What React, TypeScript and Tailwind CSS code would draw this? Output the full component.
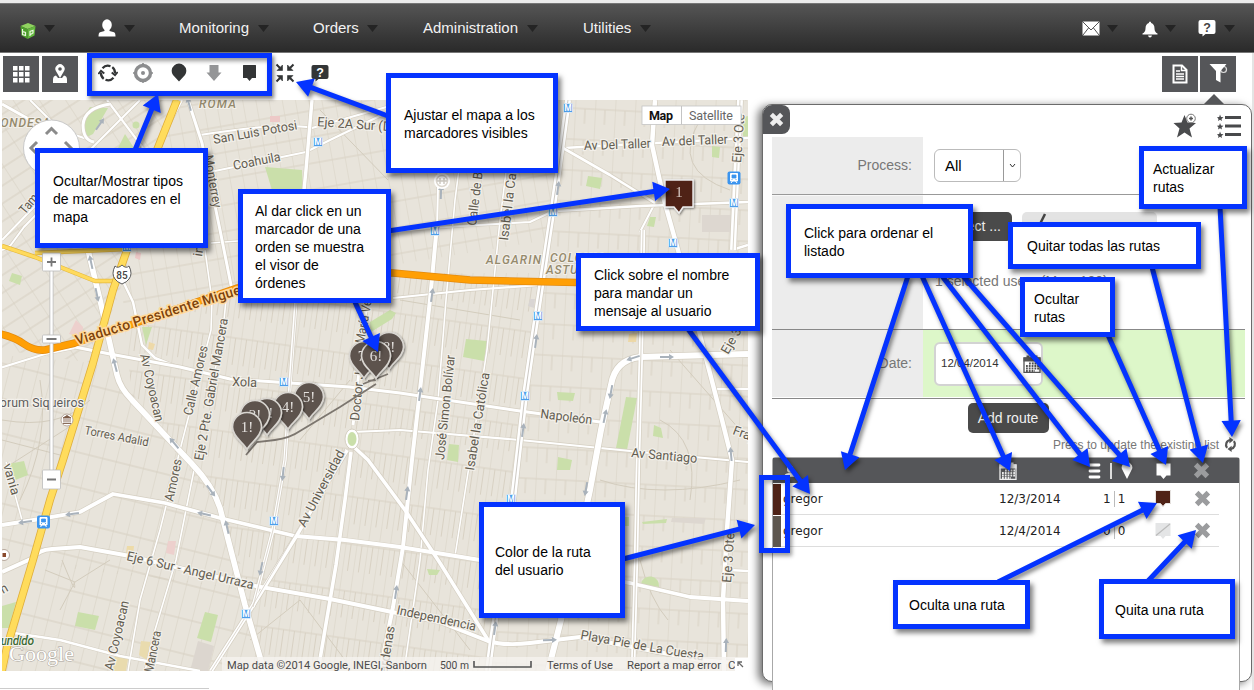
import React from "react";

/* ---------- map data ---------- */

type Road = [string, number];

const MINOR_ROADS: Road[] = [
  ["M468 100 L455 200 L446 300 L438 400 L428 470 L420 560 L404 671", 1.6],
  ["M515 100 L500 220 L487 350 L470 460 L455 556", 1.6],
  ["M2 240 L60 180 L110 130 L140 100", 2],
  ["M30 100 L60 130 L90 140", 2],
  ["M2 104 L34 122", 3],
  ["M200 135 Q280 122 312 128 L390 106", 2],
  ["M140 195 L210 172 L306 152 L330 140 L388 112", 2],
  ["M211 243 L238 241 M205 250 L212 300 L211 330 L182 442 L160 530 L140 600 L128 671", 1.6],
  ["M226 300 L222 340 L208 400 M195 465 L176 560 L155 630 L145 671", 1.6],
  ["M120 275 L133 302 L142 345 L155 358 L180 368", 2.5],
  ["M182 100 L165 132 M107 100 L143 148", 2.2],
  ["M352 432 L400 430 L520 440 L640 452 L748 462", 2.2],
  ["M393 298 L470 290 L540 285", 2.2],
  ["M6 462 L22 520", 1.6],
  ["M14 633 L60 640 L120 656 L200 671", 2.4],
  ["M0 368 L45 354 L75 348", 2],
  ["M2 250 L10 246 L24 227 L60 190", 2],
  ["M555 210 L530 222 L460 226 L380 232", 2],
  ["M735 249 L748 245 M716 389 L748 389 M729 570 L748 571", 2.4],
  ["M655 203 L640 232 M440 100 L437 230", 2],
  ["M563 148 L748 138", 2.4],
];

const MAJOR_ROADS: Road[] = [
  ["M75 347 L110 354 L180 367 L230 379 L290 383 L350 387 L400 393 L520 411 L600 422", 3],
  ["M188 100 L202 143 L220 230 L232 290", 3],
  ["M312 100 L306 170 L300 230 L296 300 L291 370 L285 460 L273 530 L253 607", 3.4],
  ["M88 250 L100 300 L117 375 Q120 388 132 400 L192 464 Q213 486 220 508 L245 605 L264 671", 5.5],
  ["M347 450 L320 495 L295 538 L252 607 L211 671", 4],
  ["M378 240 L366 310 L358 380 L353 425", 3],
  ["M351 452 L345 500 L336 565 L328 612 L318 671", 3.6],
  ["M355 448 L368 460 L405 510 L440 563 L488 640", 3.6],
  ["M2 525 L40 519 L80 512 L113 494 L165 503 L220 518 L295 536 L345 540 L400 547 L480 560 L630 583 L690 597 L748 601", 3.8],
  ["M2 572 L33 558 Q38 550 52 549 L80 547 L130 556 L250 585 L330 599 L392 612 L440 622 L488 641 Q505 646 530 643 L580 637 L700 660 L748 664", 4],
  ["M437 225 L430 300 L420 390 L412 460 L403 547 L393 607 L380 671", 4],
  ["M568 100 L557 180 L548 240 L533 340 L525 395 L513 500 L492 640 L488 671", 6],
  ["M748 354 L640 357 Q615 360 611 385 L601 430 L590 490 L575 560 L561 620 L548 671", 6],
  ["M643 230 L641 350 L638 460 L636 560 L633 671", 4.5],
  ["M740 100 L736 180 L733 250", 6],
  ["M655 100 L652 145 L664 200 L678 250 L700 335 L713 385 L722 420 L732 460 L727 530 L723 600 L724 671", 4.5],
  ["M563 148 L610 175 L655 203", 2.6],
  ["M555 211 L640 206 L748 202", 2.6],
  ["M110 104 Q84 108 83 125 Q83 140 94 142", 3],
];

const PARKS = [
  "M90 107 L108 108 L93 134 L85 138 L83 118 Z",
  "M118 148 L125 134 L134 148 Z",
  "M265 167 L302 170 L303 190 L272 190 Z",
  "M12 273 L22 276 L20 285 L9 281 Z",
  "M370 322 L390 310 L396 313 L392 319 L371 332 Z",
  "M142 327 L152 327 L146 345 Z",
  "M466 339 L487 341 L484 361 L463 357 Z",
  "M557 392 L575 393 L573 401 L558 400 Z",
  "M626 397 L637 398 L627 450 L616 448 Z",
  "M654 425 L661 428 L663 438 L653 436 Z",
  "M449 444 L459 445 L458 462 L447 460 Z",
  "M558 457 L572 460 L570 470 L557 470 Z",
  "M588 176 L602 178 L600 189 L586 186 Z",
  "M650 217 L656 217 L654 227 L647 226 Z",
  "M712 146 L720 147 L719 158 L712 157 Z",
  "M742 118 L748 116 L748 138 L743 136 Z",
  "M8 464 L24 461 L28 475 L13 481 Z",
  "M78 612 L99 616 L95 630 L75 626 Z",
  "M205 612 L218 615 L211 642 L197 638 Z",
  "M2 606 L16 602 L9 628 L2 628 Z",
  "M642 522 L667 519 L666 523 L643 524 Z",
  "M641 584 A9 9 0 0 1 659 587 Z",
  "M427 569 L440 570 L437 575 L429 575 Z",
  "M625 517 L629 517 L629 526 L625 526 Z",
];

const BLOCKS: [string, string][] = [
  ["M76 320 L83 327 L82 337 L69 334 Z", "#edd0cd"],
  ["M168 541 L176 541 L174 555 L166 553 Z", "#edd0cd"],
  ["M270 116 L280 116 L280 122 L270 122 Z", "#edc9c7"],
  ["M136 252 L141 253 L140 260 L135 258 Z", "#edc9c7"],
  ["M629 334 L637 333 L636 342 L628 342 Z", "#eed9a8"],
  ["M141 641 L151 642 L147 660 L139 655 Z", "#e9dbae"],
  ["M115 655 L128 659 L126 671 L113 671 Z", "#e9dbae"],
  ["M127 546 L134 546 L133 555 L126 553 Z", "#eddba8"],
  ["M149 342 L155 344 L153 350 L148 349 Z", "#eed9a8"],
  ["M198 641 L214 646 L208 671 L190 671 Z", "#dcd6cf"],
  ["M702 215 L736 215 L736 232 L702 232 Z", "#ddd7d0"],
  ["M672 518 L706 518 L704 524 L671 522 Z", "#ddd7d0"],
  ["M530 299 L535 299 L534 308 L528 306 Z", "#d9d5d3"],
];

type Label = [string, number, number, number, number, number?];

const STREET_LABELS: Label[] = [
  ["San Luis Potosi", 214, 144, -10, 85],
  ["Coahuila", 234, 170, -11, 48],
  ["Eje 2A Sur (D", 317, 126, 4, 74],
  ["Monterrey", 204, 156, 80, 53],
  ["Tam", 25, 215, -50, 22],
  ["in", 202, 257, -82, 11],
  ["Av Del Taller", 584, 150, -2, 67],
  ["Av del Taller", 662, 146, -2, 66],
  ["Eje 3 Ote", 741, 163, -86, 49],
  ["Eje 3 Ote", 731, 583, -86, 50],
  ["Calle de B", 476, 226, -83, 54],
  ["Isabel la Ca", 508, 241, -83, 68],
  ["Av Coyoacan", 140, 355, 77, 69],
  ["Calle Amores", 192, 416, -77, 71],
  ["Eje 2 Pte. Gabriel Mancera", 203, 461, -80, 144],
  ["Xola", 232, 386, 2, 25],
  ["Torres Adalid", 84, 434, 11, 65, 12],
  ["Doctor J", 359, 421, -84, 49],
  ["María Ve", 364, 344, -80, 44],
  ["Av Universidad", 305, 528, -62, 85],
  ["Amores", 173, 502, -78, 43],
  ["Av Coyoacan", 113, 671, -77, 71],
  ["Mancera", 153, 673, -79, 42],
  ["Eje 6 Sur - Angel Urraza", 126, 560, 13, 130],
  ["vania", 3, 465, 74, 32],
  ["José Simon Bolívar", 444, 460, -84, 105],
  ["Isabel la Católica", 474, 471, -81, 99],
  ["Napoleón", 540, 418, 7, 52],
  ["Av Santiago", 631, 457, 5, 66],
  ["Fray", 732, 434, 20, 24],
  ["Eje 3", 728, 355, -60, 28],
  ["Independencia", 396, 614, 12, 81],
  ["Playa Pie de La Cuesta", 580, 639, 10, 125],
  ["Cárdenas", 386, 682, -81, 56],
  ["n", 3, 594, -30, 7],
];

const AREA_LABELS: Label[] = [
  ["ROMA", 199, 108, 0, 37],
  ["CONDESA", -8, 127, 0, 58],
  ["ALGARIN", 486, 264, 0, 55],
  ["COLONIA", 550, 262, 0, 55],
  ["ASTURIAS", 546, 274, 0, 60],
];

const METRO: [number, number][] = [
  [318, 142], [568, 108], [284, 382], [553, 212], [435, 231], [673, 243],
  [734, 203], [538, 316], [525, 396], [274, 521], [246, 614], [511, 499], [127, 247],
];

const FLOW_ARROWS: [number, number, number][] = [
  [189, 104, -15], [100, 124, 35], [91, 262, -12], [97, 295, 168], [115, 365, -15], [174, 443, -40],
  [558, 188, 8], [432, 295, 8], [536, 341, 8], [420, 394, 8], [523, 430, 8], [611, 392, 190],
  [605, 416, 12], [633, 358, 252], [667, 357, 90], [731, 454, -5], [72, 514, 262], [25, 522, 262],
  [204, 514, 282], [211, 491, 143], [227, 527, -13], [283, 474, 186], [261, 569, 192], [396, 592, 8],
  [407, 493, 8], [586, 489, 190], [495, 628, 8], [550, 640, 88], [726, 645, 2], [441, 192, 2],
];

const PINS: [string, number, number][] = [
  ["5!", 309, 399], ["4!", 288, 409], ["3!", 267, 415], ["2!", 255, 417], ["1!", 247, 429],
  ["8!", 389, 349], ["7!", 364, 358], ["6!", 376, 358],
];

function MapCanvas() {
  return (
    <svg viewBox="2 100 746 571" width={746} height={571} className="block font-['Roboto',sans-serif]">
      <defs>
        <pattern id="g1" width="11" height="47" patternUnits="userSpaceOnUse" patternTransform="rotate(8)">
          <path d="M0 0V47M0 20H11M5.5 20V47" stroke="#d8d1c3" strokeWidth="1" fill="none" />
        </pattern>
        <pattern id="g2" width="14" height="34" patternUnits="userSpaceOnUse" patternTransform="rotate(14)">
          <path d="M0 0V34M0 12H14" stroke="#d6cfc1" strokeWidth="1" fill="none" />
        </pattern>
        <pattern id="g3" width="22" height="15" patternUnits="userSpaceOnUse" patternTransform="rotate(-33)">
          <path d="M0 0V15M0 7H22" stroke="#d6cfc1" strokeWidth="1" fill="none" />
        </pattern>
        <pattern id="g4" width="13" height="26" patternUnits="userSpaceOnUse" patternTransform="rotate(-10)">
          <path d="M0 0V26M0 7H13" stroke="#d8d1c3" strokeWidth="1" fill="none" />
        </pattern>
        <pattern id="g5" width="20" height="31" patternUnits="userSpaceOnUse" patternTransform="rotate(3)">
          <path d="M0 0V31M0 16H20M10 16V31" stroke="#d8d1c3" strokeWidth="1" fill="none" />
        </pattern>
        <filter id="pinShade" x="-30%" y="-30%" width="160%" height="160%">
          <feDropShadow dx="1" dy="1" stdDeviation="1" floodOpacity="0.5" />
        </filter>
      </defs>
      <rect x="2" y="100" width="746" height="571" fill="#e8e4db" />
      <path d="M2 100H175L120 290L93 363L2 350Z" fill="url(#g3)" />
      <path d="M175 100H560L548 240L240 290L125 320L120 270Z" fill="url(#g4)" />
      <path d="M125 325L240 290L393 273H545L488 671H264L220 508L132 400Z" fill="url(#g1)" />
      <path d="M2 355L93 363L117 375L192 464L220 508L250 590L2 560Z" fill="url(#g2)" />
      <path d="M30 558L250 590L264 671H2Z" fill="url(#g2)" />
      <path d="M568 100H748V671H488L525 395Z" fill="url(#g5)" />
      <path
        d="M2 420Q60 430 90 400M2 440L60 455M20 500Q50 440 40 380M2 470L80 420M62 560Q78 600 74 582M45 570L75 582L110 560M75 582L60 610M520 320L400 300M300 440L350 380M600 480Q660 500 740 480M660 420Q700 440 690 500M670 350L740 430M668 620Q650 600 640 560M250 640L300 600L345 660M400 560L470 650M700 120Q670 170 730 190M320 110L388 180"
        stroke="#d3ccbd" fill="none"
      />
      {PARKS.map((d) => <path key={d} d={d} fill="#cadfaa" />)}
      {BLOCKS.map(([d, c]) => <path key={d} d={d} fill={c} />)}
      <circle cx="136" cy="125" r="3.5" fill="#cadfaa" />
      <g fill="none" strokeLinejoin="round">
        {MINOR_ROADS.map(([d, w]) => <path key={d} d={d} stroke="#d5cfc2" strokeWidth={w + 1.2} />)}
        {MINOR_ROADS.map(([d, w]) => <path key={"t" + d} d={d} stroke="#fff" strokeWidth={w} />)}
        {MAJOR_ROADS.map(([d, w]) => <path key={d} d={d} stroke="#d5cfc2" strokeWidth={w + 1.4} />)}
        {MAJOR_ROADS.map(([d, w]) => <path key={"t" + d} d={d} stroke="#fff" strokeWidth={w} />)}
        <path d="M568 100L557 180L548 240L533 340L525 395L513 500L492 640L488 671" stroke="#ccc8c2" />
        <path d="M643 230L641 350L638 460L636 560L633 671M740 100L733 250" stroke="#d9d4ca" />
        <path d="M345 450L250 610L211 671M302 220L285 460L273 530L253 607" stroke="#d3cdc3" strokeWidth="0.8" />
        <path d="M2 246L35 257L95 281H116M35 253L127 249" stroke="#e5b93f" strokeWidth="4.5" />
        <path d="M2 246L35 257L95 281H116M35 253L127 249" stroke="#ffda5c" strokeWidth="3.2" />
        <path d="M177 100L155 155L127 250L113 290L93 363L63 460L50 500L33 560L7 647L1 675" stroke="#dfae3b" strokeWidth="8" />
        <path d="M177 100L155 155L127 250L113 290L93 363L63 460L50 500L33 560L7 647L1 675" stroke="#ffdc5c" strokeWidth="6.4" />
        <path d="M0 334Q14 337 24 344T45 350L75 343L130 325L240 287Q300 270 393 273L470 280L600 283" stroke="#e28a10" strokeWidth="7.5" />
        <path d="M0 334Q14 337 24 344T45 350L75 343L130 325L240 287Q300 270 393 273L470 280L600 283" stroke="#ff9f05" strokeWidth="6" />
      </g>
      <ellipse cx="352" cy="439" rx="7" ry="10" fill="#fff" stroke="#d5cfc2" />
      <ellipse cx="352" cy="439" rx="4.5" ry="7" fill="#cadfaa" />
      {FLOW_ARROWS.map(([x, y, a], i) => (
        <path key={i} transform={`translate(${x} ${y}) rotate(${a})`} d="M0-7L3-2H1V7H-1V-2H-3Z" fill="#a9b2bb" />
      ))}
      <g fill="#625c50" stroke="#f3f0ea" strokeWidth="2.4" paintOrder="stroke" fontSize="13">
        {STREET_LABELS.map(([t, x, y, a, l, s], i) => (
          <text key={i} transform={`translate(${x} ${y}) rotate(${a})`} textLength={l} lengthAdjust="spacingAndGlyphs" fontSize={s ?? 13}>{t}</text>
        ))}
        <text x="-7" y="407" fontSize="12.5" textLength="91" fill="#5c5c5c">Forum Siqueiros</text>
      </g>
      <g fill="#958a6d" stroke="#f3f0ea" strokeWidth="2" paintOrder="stroke" fontSize="12" fontStyle="italic" fontWeight="500">
        {AREA_LABELS.map(([t, x, y, , l]) => <text key={t} x={x} y={y} textLength={l}>{t}</text>)}
      </g>
      <text transform="translate(77 345) rotate(-17.2)" textLength="176" fontSize="14" fontWeight="500" fill="#7d420b" stroke="#ffd99a" strokeWidth="3" paintOrder="stroke">
        Viaducto Presidente Miguel
      </text>
      <text x="-7" y="645" fontSize="12" fontStyle="italic" fontWeight="500" textLength="41" fill="#3d6b35" stroke="#f3f0ea" strokeWidth="2" paintOrder="stroke">Hundido</text>
      {METRO.map(([x, y]) => (
        <g key={x + "-" + y}>
          <rect x={x - 4.5} y={y - 4.5} width="9" height="9" rx="1" fill="#4d9eea" stroke="#e7f1fa" strokeWidth="0.8" />
          <text x={x} y={y + 3} fontSize="8.5" fontWeight="700" textAnchor="middle" fill="#fff">M</text>
        </g>
      ))}
      {[[43.5, 522], [734, 178]].map(([x, y]) => (
        <g key={x} transform={`translate(${x} ${y})`}>
          <rect x="-6.5" y="-6.5" width="13" height="13" rx="2" fill="#3b94ee" />
          <path d="M-3.5-4.5H3.5V3H-3.5ZM-3 5L-1.5 3M3 5L1.5 3" fill="#fff" stroke="#fff" />
          <path d="M-2-3H2V0H-2ZM-2.500 1.500H-1.500M1.500 1.500H2.500" fill="#3b94ee" stroke="#3b94ee" strokeWidth="0.8" />
        </g>
      ))}
      <path d="M115 266Q118 269 122 265Q126 269 129 266Q133 274 129 279Q127 282 122 284Q117 282 115 279Q111 274 115 266Z" fill="#fff" stroke="#5b5b5b" />
      <text x="122" y="279" fontSize="10" fontWeight="500" textAnchor="middle" fill="#444">85</text>
      <circle cx="67" cy="420" r="6" fill="#fff" stroke="#b7a89c" />
      <path d="M63 418L67 415.5L71 418ZM64 419V422.5M66 419V422.5M68 419V422.5M70 419V422.5M63 423.5H71" stroke="#7b5a46" fill="#7b5a46" strokeWidth="0.9" />
      <circle cx="4" cy="555" r="5.5" fill="#fff" stroke="#b7a89c" />
      <rect x="2.5" y="553" width="3.5" height="4" fill="#8a4a2d" />
      <circle cx="442" cy="181" r="8" fill="#fff" />
      <circle cx="442" cy="181" r="5.5" fill="none" stroke="#dcd7cf" strokeWidth="1.5" />
      <path d="M440 178V184M444 178V184M437 181H447" stroke="#d0cbc4" strokeWidth="1.500" />

      {/* driven route and its stops */}
      <path d="M246 455L257 442L275 440Q290 438 300 431L340 407L376 384M363 384L388 374M368 381L376 380" fill="none" stroke="#7c766f" strokeWidth="1.8" />
      {PINS.map(([t, x, y]) => (
        <g key={t} transform={`translate(${x} ${y})`} filter="url(#pinShade)">
          <path d="M0 20.5C-2.500 14-14.500 8-14.500-2A14.500 14.500 0 1 1 14.500-2C14.500 8 2.500 14 0 20.500Z" fill="#5d534d" stroke="#d9d6d1" strokeWidth="1.6" />
          <text x="0" y="3" fontSize="15" textAnchor="middle" fill="#e4e1de" className="font-['Liberation_Serif',serif]">{t}</text>
        </g>
      ))}
      <g filter="url(#pinShade)">
        <path d="M665 180H693V207H683L679 213L674 207H665Z" fill="#4f2317" stroke="#eee" strokeWidth="1.4" />
        <text x="679" y="197" fontSize="15" textAnchor="middle" fill="#d6c8c2" className="font-['Liberation_Serif',serif]">1</text>
      </g>

      {/* pan and zoom controls */}
      <circle cx="51.5" cy="148" r="28" fill="#fff" stroke="#c9c9c9" />
      <g fill="none" stroke="#8b8b8b" strokeWidth="3">
        <path d="M46 134L51.500 128.500L57 134M37 142L31 148L37 154M65 142L71 148L65 154" />
      </g>
      <path d="M51.500 270V471" stroke="#bdbdbd" strokeWidth="4" />
      <path d="M51.500 270V471" stroke="#fff" strokeWidth="2.4" />
      <g fill="#fff" stroke="#bbb" strokeWidth="0.8">
        <rect x="42.500" y="253" width="18" height="18" rx="1" />
        <rect x="42.500" y="335" width="18" height="8" rx="1" />
        <rect x="42.500" y="470" width="18" height="19" rx="1" />
      </g>
      <path d="M47 262H56M51.500 257.500V266.500M46.500 339H56.500M47 479.500H56" stroke="#777" strokeWidth="1.8" />

      {/* map type switch */}
      <rect x="642" y="106" width="99" height="18.500" fill="#fff" stroke="#c4c4c4" strokeWidth="0.8" />
      <path d="M681.500 106V124.500" stroke="#c4c4c4" />
      <text x="649" y="120" fontSize="12.500" fontWeight="700" textLength="24" fill="#111">Map</text>
      <text x="689" y="120" fontSize="12.500" textLength="44" fill="#666">Satellite</text>

      {/* attribution */}
      <rect x="222" y="657" width="526" height="14" fill="#f5f3ef" fillOpacity="0.8" />
      <g fontSize="11.500" fill="#4a4a4a">
        <text x="227" y="668.500" textLength="200" lengthAdjust="spacingAndGlyphs">Map data ©2014 Google, INEGI, Sanborn</text>
        <text x="440" y="668.500" textLength="29" lengthAdjust="spacingAndGlyphs">500 m</text>
        <text x="547" y="668.500" textLength="66" lengthAdjust="spacingAndGlyphs">Terms of Use</text>
        <text x="627" y="668.500" textLength="94" lengthAdjust="spacingAndGlyphs">Report a map error</text>
        <text x="728" y="668.500">C</text>
      </g>
      <path d="M474 661V667H531V661" fill="none" stroke="#555" strokeWidth="1.600" />
      <rect x="735" y="658" width="13" height="13" fill="#fff" />
      <path d="M738 666V662H742M738.500 662.500L743 667" fill="none" stroke="#666" strokeWidth="1.300" />
      <text x="9" y="661" fontSize="22" textLength="65" lengthAdjust="spacingAndGlyphs" fill="#fff" stroke="#aaa59c" strokeWidth="1" paintOrder="stroke" className="font-['Liberation_Serif',serif]">Google</text>
    </svg>
  );
}

/* ---------- icons ---------- */

const Caret = () => (
  <svg width="11" height="7" viewBox="0 0 11 7"><path d="M0 0H11L5.500 7Z" fill="#242424" /></svg>
);

const CubeIcon = () => (
  <svg width="16" height="18" viewBox="0 0 16 18">
    <path d="M8 1L15.500 4L7.500 7L0.500 4Z" fill="#8fd35f" />
    <path d="M0.500 4L7.500 7V17L1.500 13.500Z" fill="#4da02c" />
    <path d="M15.500 4L7.500 7V17L14.500 13.500Z" fill="#63b83d" />
    <path d="M2.500 7V12.500L5.500 13.500V10.500L2.500 9.500M10 14V9.500L13 8.300V11L10.500 12.500" stroke="#eaf7df" fill="none" strokeWidth="1.200" />
  </svg>
);

const UserIcon = () => (
  <svg width="18" height="18" viewBox="0 0 18 18" fill="#fff">
    <ellipse cx="9" cy="6" rx="4.800" ry="5.700" />
    <path d="M6.500 9H11.500V12L16 13.200Q17.500 13.800 17.500 17.500H0.500Q0.500 13.800 2 13.200L6.500 12Z" />
  </svg>
);

const MailIcon = () => (
  <svg width="18" height="15" viewBox="0 0 18 15">
    <rect x="0.500" y="0.500" width="17" height="14" rx="1" fill="#fff" />
    <path d="M1 1L9 9L17 1M1 14L6.500 7M17 14L11.500 7" stroke="#555" fill="none" strokeWidth="1" />
  </svg>
);

const BellIcon = () => (
  <svg width="16" height="17" viewBox="0 0 16 17" fill="#fff">
    <path d="M8 0.500Q9 0.500 9.200 2Q12.500 3 12.500 7.500Q12.500 11 15.500 12.500V13.500H0.500V12.500Q3.500 11 3.500 7.500Q3.500 3 6.800 2Q7 0.500 8 0.500Z" />
    <path d="M6 14.500H10Q9.500 16.500 8 16.500T6 14.500Z" />
  </svg>
);

const HelpBubble = ({ bg, fg }: { bg: string; fg: string }) => (
  <svg width="18" height="18" viewBox="0 0 18 18">
    <path d="M2.500 1H15.500Q17.500 1 17.500 3V13Q17.500 15 15.500 15H7.500L4.500 17.500V15H2.500Q0.500 15 0.500 13V3Q0.500 1 2.500 1Z" fill={bg} />
    <text x="9" y="12.500" fontSize="12.500" fontWeight="700" textAnchor="middle" fill={fg} className="font-['Liberation_Sans',sans-serif]">?</text>
  </svg>
);

const RefreshIcon = ({ color }: { color: string }) => (
  <svg width="15" height="15" viewBox="0 0 20 20">
    <path d="M5.500 14.500A6.500 6.500 0 0 1 9.500 4M14.500 5.500A6.500 6.500 0 0 1 10.500 16" fill="none" stroke={color} strokeWidth="3" />
    <path d="M8.500 0L14 4L8.500 8.500ZM11.500 11.500L6 16L11.500 20Z" fill={color} />
  </svg>
);

const SyncRing = () => (
  <svg width="20" height="20" viewBox="0 0 20 20" fill="none" stroke="#333536" strokeWidth="2.200">
    <path d="M4.500 5.200A7.200 7.200 0 0 1 12.500 3.200M14.300 4.200A7.200 7.200 0 0 1 17 10.500M15.500 14.800A7.200 7.200 0 0 1 7.500 16.800M5.700 15.800A7.200 7.200 0 0 1 3 9.500" />
    <path d="M0.300 11L3 7.800L6.300 10.500M13.700 9.500L17 12.200L19.700 9" strokeWidth="1.800" />
  </svg>
);

const CrossIcon = ({ size, color }: { size: number; color: string }) => (
  <svg width={size} height={size} viewBox="0 0 16 16">
    <path d="M2.500 2.500L13.500 13.500M13.500 2.500L2.500 13.500" stroke={color} strokeWidth="4.800" />
  </svg>
);

const CalendarIcon = ({ color, cell }: { color: string; cell: string }) => (
  <svg width="18" height="18" viewBox="0 0 18 18">
    <path d="M1 3H17V17.500H1Z" fill="none" stroke={color} strokeWidth="1.300" />
    <path d="M0.500 2.500H17.500V6.500H0.500ZM3.500 0.500H6.500V3H3.500ZM11.500 0.500H14.500V3H11.500Z" fill={color} />
    <path d="M6 8.500H16M3 11H16M3 13.500H16M3 16H12" stroke={cell} strokeWidth="1.800" strokeDasharray="1.800 1" />
  </svg>
);

const toolIcons: React.ReactNode[] = [
  <SyncRing key="sync" />,
  <svg key="target" width="20" height="20" viewBox="0 0 20 20">
    <circle cx="10" cy="10" r="7.500" fill="none" stroke="#8c8d8f" strokeWidth="3.400" />
    <circle cx="10" cy="10" r="2" fill="#8c8d8f" />
    <path d="M10 0V3M10 17V20M0 10H3M17 10H20" stroke="#8c8d8f" strokeWidth="1.500" />
  </svg>,
  <svg key="pin" width="16" height="19" viewBox="0 0 16 19"><path d="M8 18.500L2 12A7.300 7.300 0 1 1 14 12Z" fill="#333536" /></svg>,
  <svg key="down" width="16" height="18" viewBox="0 0 16 18"><path d="M3.500 1H12.500V8.500H15.500L8 17L0.500 8.500H3.500Z" fill="#949597" /></svg>,
  <svg key="flag" width="15" height="18" viewBox="0 0 15 18"><path d="M1.500 1H13.500Q14 1 14 1.500V14H10L7.500 17L5 14H1V1.500Q1 1 1.500 1Z" fill="#333536" /></svg>,
  <svg key="fit" width="20" height="20" viewBox="0 0 20 20" fill="#333536" stroke="#333536" strokeWidth="2">
    <path d="M1.500 1.500L5 5M18.500 1.500L15 5M1.500 18.500L5 15M18.500 18.500L15 15" />
    <path d="M7.500 2V7.500H2ZM12.500 2V7.500H18ZM7.500 18V12.500H2ZM12.500 18V12.500H18Z" strokeWidth="0.600" />
  </svg>,
  <HelpBubble key="help" bg="#333536" fg="#fff" />,
];

/* ---------- header and toolbar ---------- */

function NavBar() {
  return (
    <header className="flex h-[50px] shrink-0 items-center border-y border-[#777] bg-linear-to-b from-[#555] to-[#2a2a2a] font-['Liberation_Sans',sans-serif] text-[15px] text-[#f2f2f2]">
      <div className="flex w-[98px] items-center gap-[8px] pl-[20px]"><span className="pt-[5px]"><CubeIcon /></span><Caret /></div>
      <div className="flex w-[81px] items-center gap-[8px]"><UserIcon /><Caret /></div>
      <div className="flex w-[134px] items-center gap-[9px]">Monitoring<Caret /></div>
      <div className="flex w-[110px] items-center gap-[8px]">Orders<Caret /></div>
      <div className="flex w-[160px] items-center gap-[9px]">Administration<Caret /></div>
      <div className="flex flex-1 items-center gap-[9px]">Utilities<Caret /></div>
      <div className="flex w-[60px] items-center gap-[7px]"><MailIcon /><Caret /></div>
      <div className="flex w-[56px] items-center gap-[7px]"><span className="pt-[2px]"><BellIcon /></span><Caret /></div>
      <div className="flex w-[56px] items-center gap-[8px]"><HelpBubble bg="#fff" fg="#444" /><Caret /></div>
    </header>
  );
}

const darkButton = "flex h-[36px] w-[36px] items-center justify-center bg-[#555659]";

function Toolbar() {
  return (
    <div className="flex h-[47px] shrink-0 items-start pt-[3px] pl-[3px]">
      <div className={darkButton}>
        <svg width="17" height="17" viewBox="0 0 17 17" fill="#fff">
          {[0, 6, 12].map((y) => [0, 6, 12].map((x) => <rect key={x + "," + y} x={x} y={y} width="4.500" height="4.500" />))}
        </svg>
      </div>
      <div className={"ml-[3px] " + darkButton}>
        <svg width="16" height="20" viewBox="0 0 16 20">
          <path d="M1 19V15.500Q1 12 4 11.500L6 14H10L12 11.500Q15 12 15 15.500V19Z" fill="#fff" />
          <path d="M8 14L4.200 7.500A4.600 4.600 0 1 1 11.800 7.500Z" fill="#fff" />
          <circle cx="8" cy="5" r="1.800" fill="#555659" />
        </svg>
      </div>
      <div className="ml-[12px] grid h-[33px] w-[248px] grid-cols-7 place-items-center">
        {toolIcons}
      </div>
      <div className="relative mr-[18px] ml-auto flex gap-[2px]">
        <div className={darkButton}>
          <svg width="16" height="20" viewBox="0 0 16 20">
            <path d="M1.500 1.500H10L14.500 6V18.500H1.500Z" fill="none" stroke="#fff" strokeWidth="2" />
            <path d="M9.500 1V6.500H15M4 7H8M4 10H12M4 12.500H12M4 15H12" fill="none" stroke="#fff" strokeWidth="1.500" />
          </svg>
        </div>
        <div className={darkButton}>
          <svg width="19" height="20" viewBox="0 0 19 20" className="-mt-[2px]">
            <circle cx="14.500" cy="6.500" r="3" fill="none" stroke="#ddd" strokeWidth="1.200" />
            <path d="M0.500 1H17.500L11.500 8V19.500L7 17V8Z" fill="#fff" />
          </svg>
        </div>
        <svg className="absolute top-[38px] right-[12px]" width="20" height="10" viewBox="0 0 20 10"><path d="M10 0L20 10H0Z" fill="#555659" /></svg>
      </div>
    </div>
  );
}

/* ---------- route panel ---------- */

const RouteRow = ({ color, date, count, hidden }: { color: string; date: string; count: string; hidden?: boolean }) => (
  <div className="flex h-[32px] font-['DejaVu_Sans',sans-serif] text-[12px] text-[#222]">
    <span className="my-[0.5px] w-[8px] shrink-0" style={{ background: color }} />
    <div className="grid w-[438px] grid-cols-[216px_100px_55px_40px_26px] items-center border-b border-[#ddd] pl-[2px]">
      <span>gregor</span>
      <span>{date}</span>
      <span className="flex items-center pl-[4px]">
        {count}<span className="mr-[3px] ml-[3px] h-[16px] w-px bg-[#bbb]" />{count}
      </span>
      <svg width="18" height="20" viewBox="0 0 18 20">
        {hidden ? (
          <g><path d="M1.500 2H16.500V15H11.500L9 18L6.500 15H1.500Z" fill="#e4e5e6" /><path d="M2 14.500L16 3" stroke="#bbb" strokeWidth="1.200" /></g>
        ) : (
          <path d="M1.500 1.500H16.500V14.500H11.500L9 17.500L6.500 14.500H1.500Z" fill="#4f2317" stroke="#e6e3e1" />
        )}
      </svg>
      <CrossIcon size={17} color="#9b9c9e" />
    </div>
  </div>
);

function RoutePanel() {
  return (
    <aside className="mt-[4px] ml-[14px] flex h-[578px] w-[490px] flex-col rounded-[10px] border border-[#6b6b6b] bg-white font-['Liberation_Sans',sans-serif] shadow-[-4px_2px_8px_rgba(0,0,0,0.55)]">
      <div className="flex h-[32px] shrink-0 items-start justify-between">
        <div className="flex h-[29px] w-[27px] items-center justify-center rounded-tl-[9px] rounded-r-[8px] bg-[#555659]">
          <CrossIcon size={15} color="#eee" />
        </div>
        <div className="flex items-center gap-[20px] pt-[8px] pr-[10px]">
          <svg width="24" height="25" viewBox="0 0 24 25">
            <path d="M11.500 2L14.500 9.500L23 10L16.500 15.500L19 24.500L11.500 19.500L4 24.500L6.500 15.500L0.500 10L8.500 9.500Z" fill="#4a4b4d" />
            <circle cx="18" cy="5.500" r="4.300" fill="#fff" stroke="#777" />
            <path d="M18 3.500V7.500M16 5.500H20" stroke="#555" strokeWidth="1.500" />
          </svg>
          <svg width="24" height="24" viewBox="0 0 24 24" stroke="#48494b" strokeWidth="3">
            <path d="M8 3.500H24M8 12H24M8 20.500H24" />
            <path d="M3 0.500L4 3L6.500 3.200L4.500 5L5 7L3 5.800L1 7L1.500 5L0 3.200L2.200 3ZM3 9L4 11.500L6.500 11.700L4.500 13.500L5 15.500L3 14.300L1 15.500L1.500 13.500L0 11.700L2.200 11.500ZM3 17.500L4 20L6.500 20.200L4.500 22L5 24L3 22.800L1 24L1.500 22L0 20.200L2.200 20Z" fill="#48494b" stroke="none" />
          </svg>
        </div>
      </div>
      <div className="ml-[9px] flex w-[473px] shrink-0 flex-col text-[14px] text-[#777]">
        <div className="flex h-[58px] border-b border-[#999]">
          <div className="flex w-[151px] items-center justify-end bg-[#ececec] pr-[11px]">Process:</div>
          <div className="flex items-center pl-[11px]">
            <div className="flex h-[33px] w-[87px] items-center overflow-hidden rounded-[6px] border border-[#bbb] bg-white text-[15px] text-black">
              <span className="flex-1 pt-[2px] pl-[10px]">All</span>
              <span className="flex h-full w-[17px] items-center justify-center border-l border-[#999]">
                <svg width="7" height="5" viewBox="0 0 7 5"><path d="M1 1L3.500 4L6 1" stroke="#333" fill="none" /></svg>
              </span>
            </div>
          </div>
        </div>
        <div className="flex h-[135px] border-b border-[#888]">
          <div className="w-[151px] border-t border-[#f8f8f8] bg-[#ececec]" />
          <div className="flex flex-1 flex-col pt-[17px] pl-[12px]">
            <div className="flex gap-[10px]">
              <div className="flex h-[29px] w-[77px] items-center justify-end rounded-[5px] bg-[#4a4a4a] pr-[11px] text-[#eee]">Select ...</div>
              <div className="flex h-[29px] w-[135px] rounded-[5px] bg-[#e3e3e3] pl-[14px]">
                <svg width="16" height="20" viewBox="0 0 16 20"><path d="M9 2L2 16" stroke="#444" strokeWidth="2.500" /></svg>
              </div>
            </div>
            <div className="pt-[31px] leading-[18px]">1 selected users (Max. 100)</div>
          </div>
        </div>
        <div className="flex h-[69px] border-b border-[#888] pb-px">
          <div className="flex w-[151px] items-center justify-end bg-[#ececec] pr-[11px]">Date:</div>
          <div className="flex flex-1 items-center bg-[#ddf7c9] pl-[11px]">
            <div className="flex h-[44px] w-[109px] items-center justify-between rounded-[6px] border-2 border-[#d3d3d3] bg-white pl-[5px] font-['Liberation_Sans',sans-serif] text-[11.5px] text-[#333]">
              12/04/2014<CalendarIcon color="#555" cell="#555" />
            </div>
          </div>
        </div>
        <div className="flex h-[38px] items-end justify-center pr-px pb-[4px]">
          <div className="flex h-[30px] w-[81px] items-center justify-center rounded-[5px] bg-[#4a4a4a] text-[#f1f1f1]">Add route</div>
        </div>
        <div className="-mt-[4px] mb-[4px] flex h-[20px] items-center justify-end gap-[4px] pt-[3px] pr-[7px] text-[12px]">
          Press to update the existing list<RefreshIcon color="#555" />
        </div>
      </div>
      <div className="ml-[9px] h-[260px] w-[468px] shrink-0 rounded-t-[3px] border border-[#a8a8a8] bg-white">
        <div className="grid h-[25px] grid-cols-[226px_109px_26px_43px_38px_26px] items-center bg-[#555659]">
          <svg className="ml-[11px]" width="12" height="16" viewBox="0 0 18 18" fill="#ddd"><ellipse cx="9" cy="6" rx="4.600" ry="5.600" /><path d="M0.500 17.500Q0 13 7 12H11Q18 13 17.500 17.500Z" /></svg>
          <CalendarIcon color="#eee" cell="#eee" />
          <svg className="-ml-[20px]" width="13" height="18" viewBox="0 0 13 18"><path d="M2 3H11M2 9H11M2 15H11" stroke="#fff" strokeWidth="2.800" strokeLinecap="round" /></svg>
          <div className="-ml-[24px] flex items-center gap-[9px]">
            <span className="h-[16px] w-[2px] bg-[#ddd]" />
            <svg width="12" height="18" viewBox="0 0 12 18"><path d="M6 17L1.500 8A5.200 5.200 0 1 1 10.500 8Z" fill="#fff" /></svg>
          </div>
          <svg className="-ml-[22px]" width="17" height="18" viewBox="0 0 17 18"><path d="M1.500 1.500H15.500V13.500H11.500L8.500 17L5.500 13.500H1.500Z" fill="#fff" /></svg>
          <span className="-ml-[22px]"><CrossIcon size={17} color="#9b9c9e" /></span>
        </div>
        <RouteRow color="#4f2317" date="12/3/2014" count="1" />
        <RouteRow color="#5e574f" date="12/4/2014" count="0" hidden />
      </div>
    </aside>
  );
}

/* ---------- annotations ---------- */

const CALLOUTS: { box: string; lines: string[] }[] = [
  { box: "left-[35px] top-[148px] w-[173px] h-[100px] pl-[13px]", lines: ["Ocultar/Mostrar tipos", "de marcadores en el", "mapa"] },
  { box: "left-[386px] top-[73px] w-[172px] h-[100px] pl-[13px]", lines: ["Ajustar el mapa a los", "marcadores visibles"] },
  { box: "left-[238px] top-[189px] w-[153px] h-[114px] pl-[12px]", lines: ["Al dar click en un", "marcador de una", "orden se muestra", "el visor de", "órdenes"] },
  { box: "left-[576px] top-[253px] w-[184px] h-[78px] pl-[13px]", lines: ["Click sobre el nombre", "para mandar un", "mensaje al usuario"] },
  { box: "left-[786px] top-[204px] w-[187px] h-[74px] pl-[13px]", lines: ["Click para ordenar el", "listado"] },
  { box: "left-[1008px] top-[222px] w-[193px] h-[47px] pl-[14px]", lines: ["Quitar todas las rutas"] },
  { box: "left-[1139px] top-[146px] w-[108px] h-[63px] pl-[9px]", lines: ["Actualizar", "rutas"] },
  { box: "left-[1020px] top-[277px] w-[95px] h-[60px] pl-[9px]", lines: ["Ocultar", "rutas"] },
  { box: "left-[479px] top-[502px] w-[146px] h-[116px] pl-[11px]", lines: ["Color de la ruta", "del usuario"] },
  { box: "left-[893px] top-[580px] w-[137px] h-[49px] pl-[11px]", lines: ["Oculta una ruta"] },
  { box: "left-[1099px] top-[579px] w-[136px] h-[60px] pl-[11px]", lines: ["Quita una ruta"] },
];

const ARROWS: [number, number, number, number][] = [
  [135, 150, 158, 94], [388, 116, 296, 82], [388, 231, 670, 189], [354, 300, 378, 352],
  [688, 329, 810, 494], [908, 276, 845, 470], [922, 276, 1010, 471], [942, 276, 1090, 467],
  [963, 276, 1130, 467], [1152, 267, 1203, 463], [1220, 207, 1232, 437], [1108, 335, 1166, 465],
  [623, 559, 755, 525], [998, 582, 1157, 503], [1148, 581, 1196, 530],
];

function Annotations() {
  return (
    <div className="pointer-events-none absolute inset-0 font-['Liberation_Sans',sans-serif] text-[14px] leading-[18px] text-black">
      <div className="absolute top-[53px] left-[87px] h-[43px] w-[185px] border-[5px] border-[#0433ff] shadow-[2px_3px_4px_rgba(0,0,0,0.5),inset_2px_3px_4px_rgba(0,0,0,0.4)]" />
      <div className="absolute top-[475px] left-[759px] h-[78px] w-[31px] border-[5px] border-[#0433ff] shadow-[2px_3px_4px_rgba(0,0,0,0.4),inset_2px_3px_4px_rgba(0,0,0,0.3)]" />
      <svg className="absolute inset-0 drop-shadow-[2px_3px_2px_rgba(0,0,0,0.5)]" width="1254" height="690" viewBox="0 0 1254 690">
        {ARROWS.map(([x1, y1, x2, y2]) => {
          const len = Math.hypot(x2 - x1, y2 - y1);
          const angle = (Math.atan2(y2 - y1, x2 - x1) * 180) / Math.PI;
          return (
            <path
              key={x1 + "," + y1}
              transform={`translate(${x1} ${y1}) rotate(${angle})`}
              d={`M0-2.500H${len - 16.5}V-9.700L${len} 0L${len - 16.5} 9.700V2.500H0Z`}
              fill="#0433ff"
            />
          );
        })}
      </svg>
      {CALLOUTS.map(({ box, lines }) => (
        <div key={box} className={"absolute flex flex-col justify-center border-[5px] border-[#0433ff] bg-white pt-px whitespace-nowrap shadow-[3px_4px_5px_rgba(0,0,0,0.5)] " + box}>
          {lines.map((line) => <span key={line}>{line}</span>)}
        </div>
      ))}
    </div>
  );
}

export default function App() {
  return (
    <div className="relative flex h-[690px] w-[1254px] flex-col overflow-hidden bg-white">
      <div className="h-[3px] shrink-0 bg-[#ececec]" />
      <NavBar />
      <Toolbar />
      <div className="flex h-[588px] shrink-0 pl-[2px]">
        <div className="h-[571px] w-[746px] shrink-0 overflow-hidden"><MapCanvas /></div>
        <RoutePanel />
      </div>
      <div className="h-px w-[209px] shrink-0 bg-[#ccc]" />
      <div className="absolute top-[53px] right-0 h-[637px] w-[2px] bg-[#e4e4e4]" />
      <Annotations />
    </div>
  );
}
